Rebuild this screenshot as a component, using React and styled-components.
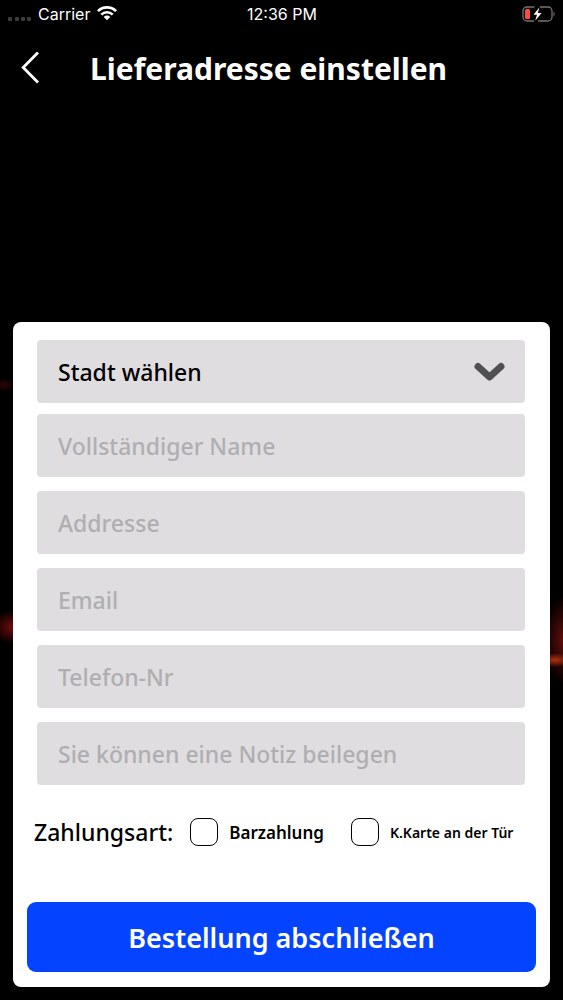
import React, { useState } from 'react';
import styled, { createGlobalStyle } from 'styled-components';

const GlobalStyle = createGlobalStyle`
  * {
    box-sizing: border-box;
  }

  body {
    margin: 0;
    background-color: #000;
    font-family: 'Noto Sans', 'Open Sans', sans-serif;
  }
`;

// Styled components
const Screen = styled.div`
  display: flex;
  flex-direction: column;
  min-height: 100vh;
  padding-bottom: 13px;
  background:
    radial-gradient(12px 7px at 4px 38.5%, #2c0407, transparent),
    radial-gradient(20px 17px at 12px 62.7%, #700a0c, transparent),
    radial-gradient(18px 7px at 555px 66%, #b0300e, transparent),
    radial-gradient(20px 44px at 100% 64%, #5c0d0a, transparent),
    #000;
`;

const StatusBar = styled.div`
  display: grid;
  grid-template-columns: 1fr auto 1fr;
  align-items: center;
  height: 28px;
  padding: 0 7px 0 8px;
  color: #fff;
  font-family: Inter, sans-serif;
  font-size: 16px;
`;

const Signal = styled.div`
  display: flex;
  align-items: center;
  gap: 6px;
`;

const BatteryIcon = styled.svg`
  justify-self: end;
`;

const Header = styled.header`
  display: flex;
  align-items: center;
  height: 82px;
  padding: 0 20px;
`;

const BackButton = styled.button`
  display: flex;
  width: 70px;
  padding: 0;
  border: none;
  background: none;
  cursor: pointer;
`;

const Title = styled.h1`
  margin: 0;
  color: #fff;
  font-size: 30px;
  font-weight: 700;
  line-height: 40px;
`;

const Card = styled.form`
  display: flex;
  flex-direction: column;
  margin: auto 13px 0;
  padding: 18px 14px 15px;
  border-radius: 8px;
  background-color: #fff;
`;

const Fields = styled.div`
  display: flex;
  flex-direction: column;
  gap: 14px;
  padding: 0 11px 0 10px;
`;

const SelectWrapper = styled.div`
  display: grid;
  align-items: center;
  margin-bottom: -3px;

  > * {
    grid-area: 1 / 1;
  }
`;

const Select = styled.select`
  appearance: none;
  width: 100%;
  height: 63px;
  padding: 0 21px;
  border: none;
  border-radius: 4px;
  background-color: #dfdde0;
  color: #000;
  font-family: inherit;
  font-size: 23px;
  font-weight: 500;
`;

const ChevronIcon = styled.svg`
  justify-self: end;
  margin-right: 20px;
  pointer-events: none;
`;

const Input = styled.input`
  width: 100%;
  height: 63px;
  padding: 0 21px;
  border: none;
  border-radius: 4px;
  background-color: #dfdde0;
  color: #000;
  font-family: inherit;
  font-size: 23px;
  font-weight: 500;

  &::placeholder {
    color: #b0aeb1;
    opacity: 1;
  }
`;

const Payment = styled.div`
  display: flex;
  align-items: center;
  height: 94px;
  margin-bottom: 23px;
  padding: 0 7px;
`;

const PaymentTitle = styled.span`
  margin-right: 17px;
  font-size: 23px;
  font-weight: 500;
`;

const Option = styled.label`
  display: flex;
  align-items: center;
  gap: 11px;
  margin-right: ${props => (props.$last ? '0' : '27px')};
  font-size: ${props => (props.$small ? '14px' : '17px')};
  font-weight: 600;
  white-space: nowrap;
`;

const Checkbox = styled.input`
  appearance: none;
  flex-shrink: 0;
  width: 28px;
  height: 28px;
  margin: 0;
  border: 1px solid #000;
  border-radius: 8px;
  background-color: #fff;

  &:checked {
    background-color: #0443ff;
  }
`;

const SubmitButton = styled.button`
  height: 70px;
  border: none;
  border-radius: 9px;
  background-color: #0443ff;
  color: #fff;
  font-family: inherit;
  font-size: 27px;
  font-weight: 600;
  cursor: pointer;
`;

const fields = [
  { name: 'name', type: 'text', label: 'Vollständiger Name' },
  { name: 'address', type: 'text', label: 'Addresse' },
  { name: 'email', type: 'email', label: 'Email' },
  { name: 'phone', type: 'tel', label: 'Telefon-Nr' },
  { name: 'note', type: 'text', label: 'Sie können eine Notiz beilegen' },
];

const paymentOptions = [
  { value: 'cash', label: 'Barzahlung' },
  { value: 'card', label: 'K.Karte an der Tür', small: true },
];

const App = () => {
  const [payment, setPayment] = useState('');

  return (
    <Screen>
      <GlobalStyle />
      <StatusBar>
        <Signal>
          <svg width="24" height="16" viewBox="0 0 24 16" fill="#3c3c3e">
            <rect x="0" y="11" width="4" height="4" rx="1" />
            <rect x="7" y="11" width="4" height="4" rx="1" />
            <rect x="13" y="11" width="4" height="4" rx="1" />
            <rect x="19" y="11" width="4" height="4" rx="1" />
          </svg>
          <span>Carrier</span>
          <svg width="22" height="16" viewBox="0 0 22 16">
            <g fill="none" stroke="#fff" strokeWidth="2.6">
              <path d="M1.9 5.1 A13 13 0 0 1 20.1 5.1" />
              <path d="M5.3 8.6 A8.2 8.2 0 0 1 16.7 8.6" />
            </g>
            <path d="M7.7 10.9 A4.7 4.7 0 0 1 14.3 10.9 L11 14.3 Z" fill="#fff" />
          </svg>
        </Signal>
        <span>12:36 PM</span>
        <BatteryIcon width="34" height="16" viewBox="0 0 34 16">
          <path
            d="M12.5 1 H5 A4 4 0 0 0 1 5 V11 A4 4 0 0 0 5 15 H12 M18 1 H26 A4 4 0 0 1 30 5 V11 A4 4 0 0 1 26 15 H16"
            fill="none"
            stroke="#77716e"
            strokeWidth="1.3"
          />
          <path d="M31.5 5.5 Q34 8 31.5 10.5 Z" fill="#77716e" />
          <rect x="3" y="3" width="5" height="10" rx="1.5" fill="#fb4b42" />
          <path d="M17.5 1.3 L11.5 8.8 H15 L13.2 14.8 L19.6 7 H15.8 Z" fill="#fff" />
        </BatteryIcon>
      </StatusBar>

      <Header>
        <BackButton type="button" aria-label="Zurück">
          <svg width="20" height="34" viewBox="0 0 20 34" fill="none" stroke="#fff" strokeWidth="2.8">
            <path d="M18 0.5 L3.2 15.5 L18 30.5" />
          </svg>
        </BackButton>
        <Title>Lieferadresse einstellen</Title>
      </Header>

      <Card onSubmit={e => e.preventDefault()}>
        <Fields>
          <SelectWrapper>
            <Select aria-label="Stadt wählen" defaultValue="">
              <option value="">Stadt wählen</option>
            </Select>
            <ChevronIcon width="32" height="20" viewBox="0 0 32 20">
              <path
                d="M5 4.5 L16.5 15 L28 4.5"
                fill="none"
                stroke="#505052"
                strokeWidth="7"
                strokeLinecap="round"
                strokeLinejoin="round"
              />
            </ChevronIcon>
          </SelectWrapper>
          {fields.map(field => (
            <Input
              key={field.name}
              name={field.name}
              type={field.type}
              placeholder={field.label}
              aria-label={field.label}
            />
          ))}
        </Fields>

        <Payment role="group" aria-labelledby="payment-title">
          <PaymentTitle id="payment-title">Zahlungsart:</PaymentTitle>
          {paymentOptions.map((option, index) => (
            <Option
              key={option.value}
              $small={option.small}
              $last={index === paymentOptions.length - 1}
            >
              <Checkbox
                type="checkbox"
                checked={payment === option.value}
                onChange={() => setPayment(payment === option.value ? '' : option.value)}
              />
              {option.label}
            </Option>
          ))}
        </Payment>

        <SubmitButton type="submit">Bestellung abschließen</SubmitButton>
      </Card>
    </Screen>
  );
};

export default App;
